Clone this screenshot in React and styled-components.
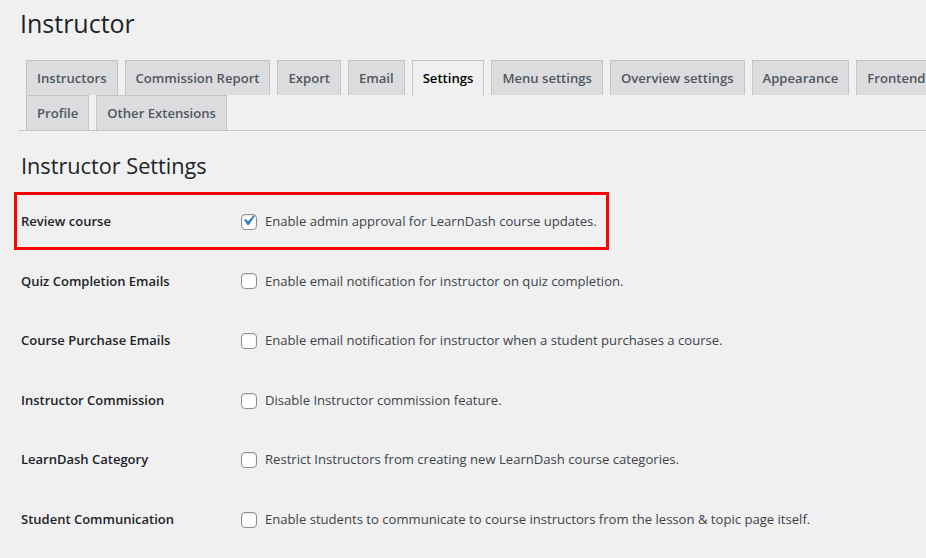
import React from "react";
import styled, { createGlobalStyle } from "styled-components";

const tabs = [
  "Instructors",
  "Commission Report",
  "Export",
  "Email",
  "Settings",
  "Menu settings",
  "Overview settings",
  "Appearance",
  "Frontend Dashboard",
  "Profile",
  "Other Extensions",
];

const settings = [
  {
    label: "Review course",
    text: "Enable admin approval for LearnDash course updates.",
    checked: true,
    marked: true,
  },
  {
    label: "Quiz Completion Emails",
    text: "Enable email notification for instructor on quiz completion.",
  },
  {
    label: "Course Purchase Emails",
    text: "Enable email notification for instructor when a student purchases a course.",
  },
  {
    label: "Instructor Commission",
    text: "Disable Instructor commission feature.",
  },
  {
    label: "LearnDash Category",
    text: "Restrict Instructors from creating new LearnDash course categories.",
  },
  {
    label: "Student Communication",
    text: "Enable students to communicate to course instructors from the lesson & topic page itself.",
  },
];

const App = () => {
  return (
    <>
      <GlobalStyle />
      <Wrap>
        <Title>Instructor</Title>

        <TabBar>
          {tabs.map((t) => (
            <Tab key={t} $active={t === "Settings"}>
              {t}
            </Tab>
          ))}
        </TabBar>

        <SectionTitle>Instructor Settings</SectionTitle>

        <Form>
          {settings.map((s) => (
            <Row key={s.label}>
              {s.marked && <Highlight />}
              <Label>{s.label}</Label>
              <Field>
                <Box $checked={s.checked}>
                  {s.checked && (
                    <svg width="21" height="21" viewBox="0 0 20 20">
                      <path
                        d="M14.83 4.89l1.34.94-5.81 8.38H9.02L5.78 9.67l1.34-1.25 2.57 2.4z"
                        fill="#3582c4"
                      />
                    </svg>
                  )}
                </Box>
                <Desc>{s.text}</Desc>
              </Field>
            </Row>
          ))}
        </Form>
      </Wrap>
    </>
  );
};

export default App;

const GlobalStyle = createGlobalStyle`
  html, body {
    margin: 0;
    background: #f0f0f1;
    overflow: hidden;
  }
  body {
    font-family: "Open Sans", "Noto Sans", sans-serif;
    color: #3c434a;
  }
`;

const Wrap = styled.div`
  padding: 7px 0 0 19px;
  width: 1040px;
`;

const Title = styled.h1`
  margin: 0 0 0 1px;
  font-size: 25px;
  font-weight: 400;
  line-height: 33px;
  color: #1d2327;
`;

const TabBar = styled.nav`
  display: flex;
  flex-wrap: wrap;
  margin-top: 20px;
  padding-left: 7px;
  width: 1013px;
  border-bottom: 1px solid #c3c4c7;
`;

const Tab = styled.span`
  box-sizing: border-box;
  height: 35px;
  margin-right: 7px;
  padding: 5px 10px;
  border: 1px solid #c3c4c7;
  border-bottom: none;
  background: ${(p) => (p.$active ? "#f0f0f1" : "#dcdcde")};
  color: ${(p) => (p.$active ? "#000" : "#50575e")};
  font-size: 13.1px;
  font-weight: 600;
  line-height: 24px;
  white-space: nowrap;
  ${(p) => p.$active && "margin-bottom: -1px; height: 36px;"}
`;

const SectionTitle = styled.h2`
  margin: 20px 0 11px 2px;
  font-size: 21.7px;
  font-weight: 400;
  line-height: 30px;
  color: #1d2327;
`;

const Form = styled.div`
  display: flex;
  flex-direction: column;
  margin-left: 2px;
`;

const Row = styled.div`
  position: relative;
  display: grid;
  grid-template-columns: 220px 1fr;
  align-items: center;
  padding: 20px 0;
  line-height: 19.6px;
`;

const Highlight = styled.div`
  position: absolute;
  left: -7px;
  top: 0;
  width: 595px;
  height: 58px;
  box-sizing: border-box;
  border: 3px solid #ff0000;
  pointer-events: none;
`;

const Label = styled.div`
  font-size: 13px;
  font-weight: 600;
  color: #1d2327;
`;

const Field = styled.label`
  display: flex;
  align-items: center;
  gap: 8px;
`;

const Box = styled.span`
  box-sizing: border-box;
  width: 16px;
  height: 16px;
  border: 1px solid #8c8f94;
  border-radius: 4px;
  background: #fff;
  box-shadow: inset 0 1px 2px rgba(0, 0, 0, 0.1);
  display: flex;
  align-items: center;
  justify-content: center;
  flex-shrink: 0;
  overflow: visible;

  svg {
    flex-shrink: 0;
    margin: -2px 0 0 -1px;
  }
`;

const Desc = styled.span`
  font-size: 13.1px;
  color: #3c434a;
`;
